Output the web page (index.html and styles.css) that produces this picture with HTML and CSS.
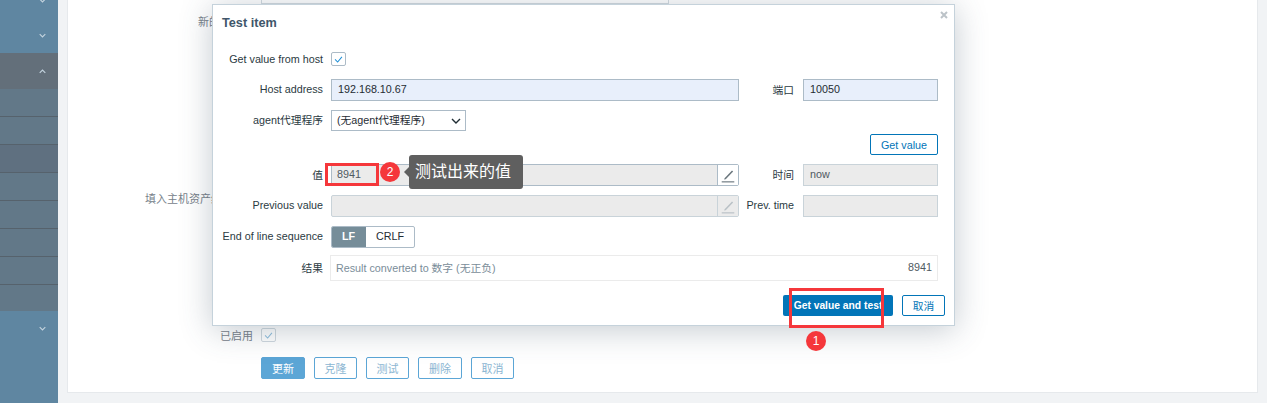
FILE: index.html
```html
<!DOCTYPE html>
<html lang="zh">
<head>
<meta charset="utf-8">
<title>Test item</title>
<link rel="stylesheet" href="styles.css">
</head>
<body>
<div class="page">
  <nav class="sidebar">
    <div class="nav-item"><svg class="chev" viewBox="0 0 10 6"><path d="M1 1l4 4 4-4"/></svg></div>
    <div class="nav-item"><svg class="chev" viewBox="0 0 10 6"><path d="M1 1l4 4 4-4"/></svg></div>
    <div class="nav-item nav-open"><svg class="chev" viewBox="0 0 10 6"><path d="M1 5l4-4 4 4"/></svg></div>
    <div class="nav-sub"></div>
    <div class="nav-sub"></div>
    <div class="nav-sub nav-sub-dark"></div>
    <div class="nav-sub"></div>
    <div class="nav-sub"></div>
    <div class="nav-sub"></div>
    <div class="nav-sub"></div>
    <div class="nav-sub nav-sub-last"></div>
    <div class="nav-item"><svg class="chev" viewBox="0 0 10 6"><path d="M1 1l4 4 4-4"/></svg></div>
  </nav>
  <main class="main">
    <section class="card">
      <div class="top-input-row"><div class="top-input"></div></div>
      <div class="bg-label bg-new">新的应用集</div>
      <div class="bg-label bg-inv">填入主机资产纪录字段</div>
      <div class="bg-enabled">
        <span class="bg-label">已启用</span>
        <span class="bg-check"><svg viewBox="0 0 14 14"><path d="M3 7.5l3 3 5-6"/></svg></span>
      </div>
      <div class="bg-buttons">
        <span class="bg-btn bg-btn-main">更新</span>
        <span class="bg-btn">克隆</span>
        <span class="bg-btn">测试</span>
        <span class="bg-btn bg-btn-wide">删除</span>
        <span class="bg-btn">取消</span>
      </div>
    </section>
  </main>
</div>

<div class="dialog">
  <svg class="close" viewBox="0 0 8 8"><path d="M1 1l6 6M7 1l-6 6"/></svg>
  <h4 class="title">Test item</h4>
  <div class="form">
    <label class="lbl lbl-first">Get value from host</label>
    <div class="cell-wide cell-first"><span class="check"><svg viewBox="0 0 14 14"><path d="M3 7.5l3 3 5-6"/></svg></span></div>

    <label class="lbl">Host address</label>
    <div class="input input-blue">192.168.10.67</div>
    <label class="lbl lbl-side">端口</label>
    <div class="input input-blue">10050</div>

    <label class="lbl">agent代理程序</label>
    <div class="cell-wide"><div class="select">(无agent代理程序)<svg class="select-arrow" viewBox="0 0 10 6"><path d="M1 1l4 4 4-4"/></svg></div></div>

    <div class="getvalue-row"><span class="btn-outline btn-strong">Get value</span></div>

    <label class="lbl">值</label>
    <div class="input input-grey input-dark textarea">8941
      <span class="edit"><svg viewBox="0 0 14 14"><path class="pen" d="M4 9.8L10.5 3l1 1L5 10.8 3.6 11z"/><path class="line" d="M1.5 13h11"/></svg></span>
    </div>
    <label class="lbl lbl-side">时间</label>
    <div class="input input-grey input-now">now</div>

    <label class="lbl">Previous value</label>
    <div class="input input-grey textarea">
      <span class="edit edit-off"><svg viewBox="0 0 14 14"><path class="pen" d="M4 9.8L10.5 3l1 1L5 10.8 3.6 11z"/><path class="line" d="M1.5 13h11"/></svg></span>
    </div>
    <label class="lbl lbl-side">Prev. time</label>
    <div class="input input-grey"></div>

    <label class="lbl">End of line sequence</label>
    <div class="cell-wide"><div class="toggle"><span class="toggle-on">LF</span><span class="toggle-off">CRLF</span></div></div>

    <label class="lbl lbl-result">结果</label>
    <div class="result"><span class="result-type">Result converted to 数字 (无正负)</span><span>8941</span></div>
  </div>
  <div class="footer">
    <span class="btn-primary">Get value and test</span>
    <span class="btn-outline btn-strong">取消</span>
  </div>
</div>

<div class="mark mark-box-test"></div>
<div class="mark mark-box-value"></div>
<div class="mark badge badge-one">1</div>
<div class="mark badge badge-two">2</div>
<div class="mark tip">测试出来的值</div>
</body>
</html>
```

FILE: styles.css
```css
* { box-sizing: border-box; }
html, body { margin: 0; height: 403px; overflow: hidden; }
body {
  font-family: "Liberation Sans", "Noto Sans CJK SC", sans-serif;
  font-size: 10.75px;
  color: #1f2c33;
  background: #f1f3f5;
  position: relative;
}
.page { display: flex; height: 403px; }

/* sidebar */
.sidebar {
  width: 58px;
  flex: none;
  margin-top: -17px;
  background: #5f86a1;
  height: 420px;
  overflow: hidden;
}
.nav-item {
  height: 35px;
  display: flex;
  align-items: center;
  justify-content: flex-end;
  padding-right: 12px;
  background: #5f86a1;
}
.nav-open { background: #636f7a; height: 36px; }
.chev { width: 7px; height: 5px; }
.chev path { fill: none; stroke: #c3d3de; stroke-width: 1.6; }
.nav-sub {
  height: 28px;
  background: #627888;
  border-bottom: 1px solid #56626c;
}
.nav-sub-dark { background: #5f7080; }
.nav-sub-last { border-bottom: 0; height: 26px; }

/* background form */
.main { flex: 1; padding: 0 9px 0 9px; min-width: 0; }
.card {
  height: 393px;
  background: #fff;
  border: 1px solid #e6e9ec;
  border-top: 0;
  padding-left: 193px;
  display: flex;
  flex-direction: column;
  font-size: 11px;
}
.top-input-row { height: 4px; }
.top-input {
  width: 408px;
  height: 4px;
  border: 1px solid #d3dbe1;
  border-top: 0;
  background: #fff;
}
.bg-label { color: #77818a; text-align: right; white-space: nowrap; }
.bg-new { margin: 11px 0 0 -63px; width: 55px; line-height: 14px; }
.bg-inv { margin: 163px 0 0 -116px; width: 108px; line-height: 14px; }
.bg-enabled {
  display: flex;
  align-items: center;
  gap: 8px;
  margin: 121px 0 0 -41px;
}
.bg-check {
  width: 15px;
  height: 14px;
  border: 1px solid #cfd8de;
  border-radius: 2px;
}
.bg-check svg, .check svg { display: block; width: 100%; height: 100%; }
.bg-check path { fill: none; stroke: #8fbfdd; stroke-width: 1.2; }
.bg-buttons { display: flex; gap: 9px; margin-top: 14px; }
.bg-btn {
  width: 43px;
  height: 22px;
  border: 1px solid #5ca6d6;
  border-radius: 2px;
  color: #8cb6d2;
  display: flex;
  align-items: center;
  justify-content: center;
}
.bg-btn-main { width: 44px; background: #5ca6d6; color: #fff; }
.bg-btn-wide { width: 44px; }

/* dialog */
.dialog {
  position: absolute;
  left: 212px;
  top: 4px;
  width: 743px;
  height: 322px;
  background: #fff;
  border: 1px solid #c5d2db;
  box-shadow: 0 4px 30px rgba(60, 80, 100, .3);
  padding: 0 16px 0 9px;
}
.close {
  position: absolute;
  right: 6px;
  top: 6px;
  width: 8px;
  height: 8px;
}
.close path { fill: none; stroke: #bcc3c8; stroke-width: 2; }
.title {
  margin: 0;
  padding-top: 10px;
  height: 47px;
  font-size: 12.7px;
  line-height: 16px;
  font-weight: bold;
  color: #40566a;
}
.form {
  display: grid;
  grid-template-columns: 101px 408px 48px 135px;
  column-gap: 8px;
  row-gap: 9px;
  align-items: center;
}
.lbl {
  text-align: right;
  white-space: nowrap;
  color: #2b3a42;
  justify-self: end;
  padding: 0 0 2px 0;
}
.lbl-side { padding-right: 1px; }
.lbl-first { align-self: start; padding-bottom: 0; line-height: 14px; }
.cell-first { align-self: start; }
.cell-wide { grid-column: 2 / 5; display: flex; }
.check {
  width: 15px;
  height: 14px;
  border: 1px solid #acbbc7;
  border-radius: 2px;
  margin-bottom: 4px;
}
.check path { fill: none; stroke: #1f8fd6; stroke-width: 1.2; }
.input {
  height: 22px;
  border: 1px solid #c9d3d9;
  padding-left: 5px;
  line-height: 19px;
  position: relative;
}
.input-blue { background: #e8effb; border-color: #acbbc7; color: #1f2c33; padding-left: 6px; }
.input-grey { background: #ebebeb; color: #4f5a61; }
.input-dark { border-color: #acbbc7; }
.input-now { padding-left: 6px; }
.textarea { border-radius: 2px; }
.edit {
  position: absolute;
  right: 0;
  top: 0;
  bottom: 0;
  width: 21px;
  background: #fff;
  border-left: 1px solid #acbbc7;
  display: flex;
  align-items: center;
  justify-content: center;
}
.edit svg { width: 16px; height: 16px; }
.pen { fill: #6a767d; }
.line { stroke: #6a767d; stroke-width: 1; }
.edit-off { background: #ebebeb; border-left-color: #c9d3d9; }
.edit-off .pen { fill: #b9c1c6; }
.edit-off .line { stroke: #b9c1c6; }
.select {
  width: 135px;
  height: 21px;
  border: 1px solid #acbbc7;
  padding-left: 5px;
  line-height: 18px;
  position: relative;
  color: #1f2c33;
}
.select-arrow {
  position: absolute;
  right: 4px;
  top: 7px;
  width: 10px;
  height: 6px;
}
.select-arrow path { fill: none; stroke: #1f2c33; stroke-width: 1.4; }
.getvalue-row {
  grid-column: 1 / 5;
  display: flex;
  justify-content: flex-end;
  margin-top: -6px;
}
.btn-outline {
  height: 21px;
  width: 68px;
  border: 1px solid #0275b8;
  border-radius: 2px;
  color: #0275b8;
  display: inline-flex;
  align-items: center;
  justify-content: center;
}
.toggle {
  display: flex;
  height: 22px;
  border: 1px solid #acbbc7;
  border-radius: 2px;
  overflow: hidden;
}
.toggle-on {
  width: 35px;
  margin: -1px 0 -1px -1px;
  background: #768d99;
  color: #fff;
  font-weight: bold;
  text-align: center;
  line-height: 21px;
}
.toggle-off { width: 48px; text-align: center; line-height: 19px; color: #1f2c33; }
.lbl-result { margin-top: -2px; }
.result {
  grid-column: 2 / 5;
  height: 26px;
  margin: -2px 0 0 -1px;
  border: 1px solid #ebebeb;
  padding: 0 5px 2px 5px;
  display: flex;
  align-items: center;
  justify-content: space-between;
  color: #4f5a61;
}
.result-type { color: #7a8d99; }
.footer {
  position: absolute;
  right: 9px;
  top: 290px;
  display: flex;
  gap: 9px;
}
.btn-primary {
  width: 110px;
  height: 21px;
  background: #0275b8;
  border-radius: 2px;
  color: #fff;
  font-size: 10.3px;
  font-weight: bold;
  display: flex;
  align-items: center;
  justify-content: center;
}
.footer .btn-outline { width: 43px; padding-bottom: 1px; }

/* annotations */
.mark { position: absolute; }
.mark-box-test { left: 789px; top: 288px; width: 95px; height: 40px; border: 3px solid #f5373b; }
.mark-box-value { left: 325px; top: 163px; width: 54px; height: 23px; border: 3px solid #f5373b; }
.badge {
  width: 20px;
  height: 20px;
  border-radius: 50%;
  background: #f5373b;
  color: #fff;
  font-family: "Liberation Sans", sans-serif;
  font-size: 12px;
  line-height: 20px;
  text-align: center;
}
.badge-one { left: 806px; top: 331px; }
.badge-two { left: 380px; top: 162px; }
.tip {
  left: 409px;
  top: 155px;
  width: 114px;
  height: 34px;
  background: #5f5f5f;
  border-radius: 3px;
  color: #fff;
  font-size: 16px;
  line-height: 34px;
  padding-left: 6px;
}
.tip::before {
  content: "";
  position: absolute;
  left: -5px;
  top: 12px;
  border: 5px solid transparent;
  border-left: 0;
  border-right-color: #5f5f5f;
}
```
